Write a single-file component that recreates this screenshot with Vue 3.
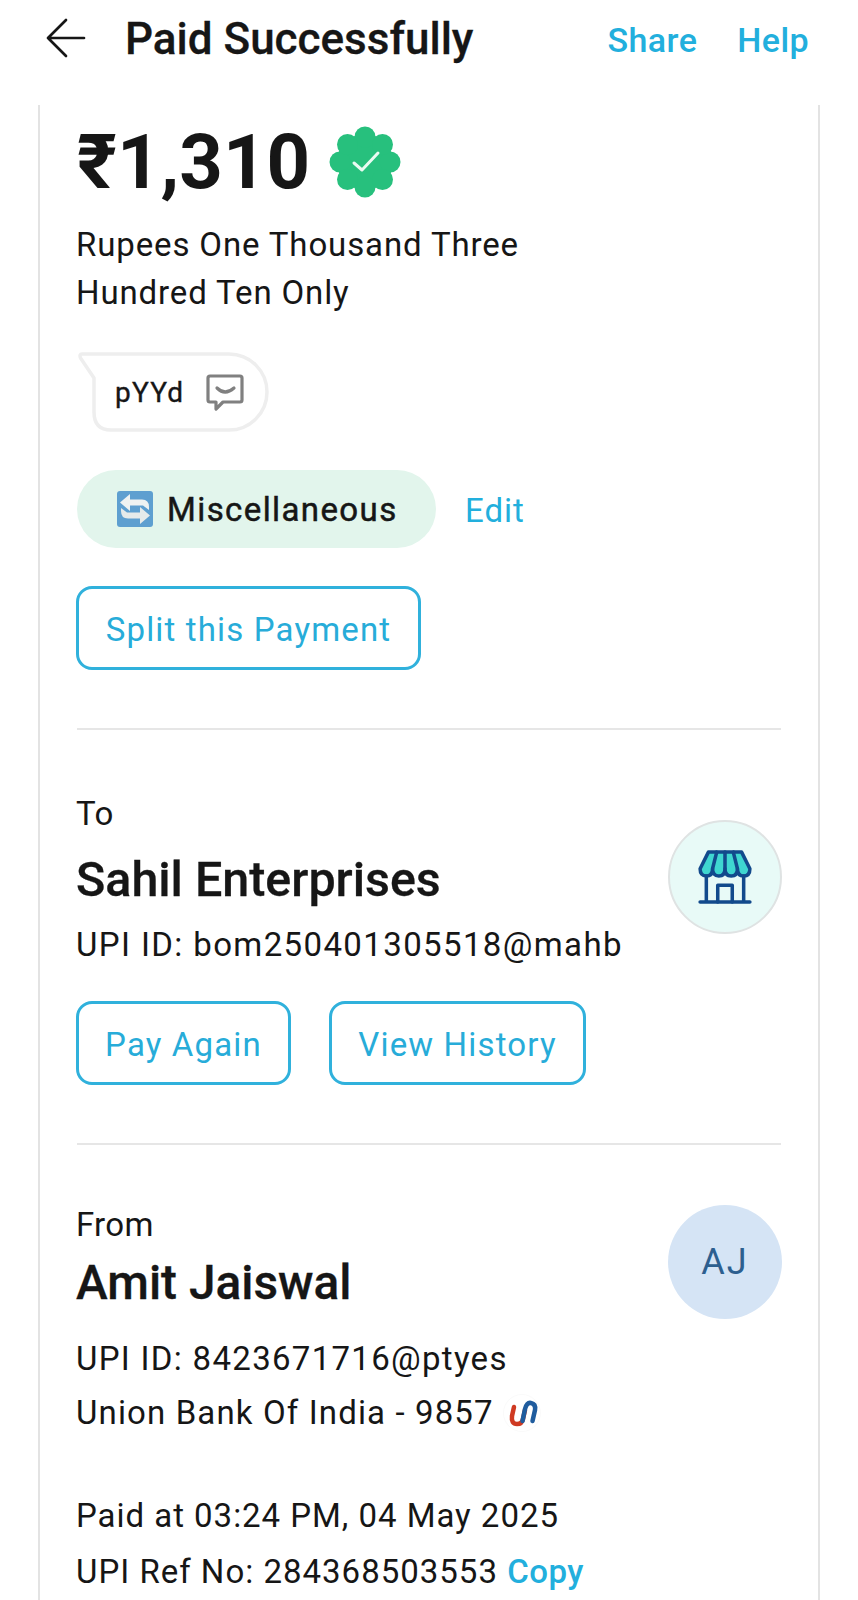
<script setup>
</script>

<template>
  <div class="page">
    <header class="top">
      <svg class="back" viewBox="0 0 40 40" width="40" height="40" fill="none" stroke="#161616" stroke-width="2.700" stroke-linecap="round" stroke-linejoin="round">
        <path d="M38 20H2M20 2 2 20l18 18" />
      </svg>
      <h1>Paid Successfully</h1>
      <a class="share">Share</a>
      <a class="help">Help</a>
    </header>

    <main class="card">
      <section class="first">
        <div class="amount">
          <span>₹1,310</span>
          <svg viewBox="0 0 72 72" width="72" height="72">
            <g fill="#27c07d">
              <circle cx="36" cy="36" r="28" />
              <circle cx="36" cy="11" r="10.500" />
              <circle cx="36" cy="61" r="10.500" />
              <circle cx="11" cy="36" r="10.500" />
              <circle cx="61" cy="36" r="10.500" />
              <circle cx="18.500" cy="18.500" r="10.500" />
              <circle cx="53.500" cy="18.500" r="10.500" />
              <circle cx="18.500" cy="53.500" r="10.500" />
              <circle cx="53.500" cy="53.500" r="10.500" />
            </g>
            <path d="M25 37l8 7 16-17" fill="none" stroke="#e9fbf2" stroke-width="3" stroke-linecap="round" stroke-linejoin="round" />
          </svg>
        </div>
        <p class="words">Rupees One Thousand Three<br />Hundred Ten Only</p>

        <div class="bubble">
          <svg class="bubble-bg" viewBox="0 0 192 80" width="192" height="80">
            <path d="M5 2H152A38 38 0 0 1 152 78H34Q17 78 17 60V26L3.500 6Q2 2 5 2Z" fill="#fff" stroke="#eeeeee" stroke-width="3.500" stroke-linejoin="round" />
          </svg>
          <span class="note">pYYd</span>
          <svg class="note-icon" viewBox="0 0 38 38" width="38" height="38" fill="none" stroke="#808080" stroke-width="3.200" stroke-linejoin="round" stroke-linecap="round">
            <path d="M4 2H34Q36 2 36 4V26Q36 28 34 28H17L10 35V28H4Q2 28 2 26V4Q2 2 4 2Z" />
            <path d="M11 14Q19 22 28 14" />
          </svg>
        </div>

        <div class="category">
          <div class="chip">
            <svg viewBox="0 0 36 36" width="36" height="36">
              <rect width="36" height="36" rx="3" fill="#5e9fd0" />
              <path d="M3 11.500 13 3V8.500H25Q32 8.500 32 16V19L26 14.500H13V20Z" fill="#eef2f2" />
              <path d="M33 24.500 23 33V27.500H11Q4 27.500 4 20V17L10 21.500H23V16Z" fill="#e6eaea" />
            </svg>
            <span>Miscellaneous</span>
          </div>
          <a class="edit">Edit</a>
        </div>

        <button class="outline split">Split this Payment</button>
      </section>

      <section class="to">
        <div class="row">
          <div>
            <div class="label">To</div>
            <div class="name">Sahil Enterprises</div>
            <div class="info upi">UPI ID: bom250401305518@mahb</div>
          </div>
          <div class="avatar store">
            <svg viewBox="0 0 52 54" width="54" height="56" fill="none" stroke="#124a8c" stroke-width="3.400" stroke-linejoin="round" stroke-linecap="round">
              <path d="M10 3H42L50 19Q50 26 44 26 38 26 38 19 38 26 32 26 26 26 26 19 26 26 20 26 14 26 14 19 14 26 8 26 2 26 2 19Z" fill="#3fd6d0" />
              <path d="M14 19 18 3M26 19V3M38 19 34 3" />
              <path d="M8 26V51M44 26V51M2 51H50" />
              <path d="M19 51V35H33V51" />
            </svg>
          </div>
        </div>
        <div class="actions">
          <button class="outline pay">Pay Again</button>
          <button class="outline history">View History</button>
        </div>
      </section>

      <section class="from">
        <div class="row">
          <div>
            <div class="label">From</div>
            <div class="name amit">Amit Jaiswal</div>
            <div class="info acc">UPI ID: 8423671716@ptyes</div>
            <div class="info bank">
              Union Bank Of India - 9857
              <svg viewBox="0 0 38 38" width="38" height="38" fill="none" stroke-width="4.500" stroke-linecap="round">
                <circle cx="19" cy="19" r="18.500" fill="#fff" stroke="#fafafa" stroke-width="1" />
                <path d="M11 13 9 22Q8 30 14 30 19 30 20 25L22 16" stroke="#cf3a22" />
                <path d="M19.500 27 22 15Q24 8 28 9 33 10 32 16L29.500 27" stroke="#1f5c9e" />
              </svg>
            </div>
          </div>
          <div class="avatar initials">AJ</div>
        </div>
        <div class="info paid">Paid at 03:24 PM, 04 May 2025</div>
        <div class="info ref">UPI Ref No: 284368503553 <a class="copy">Copy</a></div>
      </section>
    </main>
  </div>
</template>

<style>
html, body { margin: 0; background: #fff; }
</style>

<style scoped>
.page {
  width: 858px;
  height: 1600px;
  overflow: hidden;
  background: #fff;
  color: #161616;
  font-family: Roboto, "Noto Sans", sans-serif;
  box-sizing: border-box;
}
.top {
  display: flex;
  align-items: center;
  height: 105px;
  padding: 0 49px 25px 46px;
  box-sizing: border-box;
}
.back { flex: none; margin-bottom: 4px; }
h1 {
  margin: 0 0 2px 39px;
  flex: 1;
  font-size: 44px;
  font-weight: 500;
  line-height: 50px;
  -webkit-text-stroke: 0.3px #161616;
}
.share, .help {
  color: #22afdd;
  font-size: 34px;
  font-weight: 500;
  letter-spacing: 0.4px;
}
.help { margin-left: 40px; }
.card {
  margin: 0 38px;
  height: 1495px;
  width: 704px;
  padding: 0 37px;
  border-left: 2px solid #e3e3e3;
  border-right: 2px solid #e3e3e3;
}
.first {
  border-bottom: 2px solid #e6e6e6;
  height: 625px;
  box-sizing: border-box;
}
.amount {
  display: flex;
  align-items: center;
  gap: 19px;
  height: 72px;
  padding-top: 21px;
  font-size: 76px;
  font-weight: 700;
  line-height: 72px;
}
.words {
  margin: 23px 0 0 -1px;
  font-size: 33px;
  line-height: 48px;
  letter-spacing: 0.87px;
}
.bubble {
  position: relative;
  display: flex;
  align-items: center;
  gap: 22px;
  width: 192px;
  height: 80px;
  margin-top: 35px;
  padding-left: 38px;
  box-sizing: border-box;
}
.bubble-bg { position: absolute; left: 0; top: 0; }
.note {
  position: relative;
  font-size: 28px;
  font-weight: 400;
  letter-spacing: 1.2px;
  -webkit-text-stroke: 0.35px #161616;
}
.note-icon { position: relative; top: 1px; }
.category {
  display: flex;
  align-items: center;
  margin-top: 38px;
}
.chip {
  display: flex;
  align-items: center;
  gap: 14px;
  width: 359px;
  height: 78px;
  padding-left: 40px;
  box-sizing: border-box;
  border-radius: 39px;
  background: #e2f5ec;
  font-size: 33px;
  font-weight: 400;
  letter-spacing: 1.4px;
  -webkit-text-stroke: 0.5px #161616;
}
.edit {
  margin: 3px 0 0 29px;
  color: #22afdd;
  font-size: 33px;
  letter-spacing: 1px;
}
.outline {
  display: flex;
  align-items: center;
  justify-content: center;
  height: 84px;
  padding: 2px 0 0;
  border: 3px solid #30b1dc;
  border-radius: 16px;
  background: #fff;
  color: #27acd9;
  font-family: inherit;
  font-size: 33px;
  letter-spacing: 1.15px;
  box-sizing: border-box;
}
.split { width: 345px; margin: 38px 0 0 -1px; }
.row {
  display: flex;
  justify-content: space-between;
}
.to {
  height: 415px;
  padding-top: 65px;
  border-bottom: 2px solid #e6e6e6;
  box-sizing: border-box;
}
.label {
  font-size: 33px;
  line-height: 38px;
  letter-spacing: 0.3px;
  margin-left: -1px;
}
.name {
  margin: 17px 0 0 -1px;
  font-size: 48.4px;
  font-weight: 500;
  line-height: 60px;
  -webkit-text-stroke: 0.3px #161616;
}
.info {
  margin-left: -1px;
  font-size: 33px;
  line-height: 44px;
}
.upi { margin-top: 13px; letter-spacing: 1.38px; }
.avatar {
  display: flex;
  align-items: center;
  justify-content: center;
  flex: none;
  width: 114px;
  height: 114px;
  margin-right: -1px;
  border-radius: 50%;
  box-sizing: border-box;
}
.store {
  margin-top: 25px;
  border: 2px solid #dfe3e3;
  background: #e8faf7;
}
.actions {
  display: flex;
  gap: 38px;
  margin: 34px 0 0 -1px;
}
.pay { width: 215px; }
.history { width: 257px; }
.from { padding-top: 61px; }
.from .amit { margin-top: 9px; font-size: 47.8px; }
.acc { margin-top: 24px; letter-spacing: 1.3px; }
.bank {
  display: flex;
  align-items: center;
  gap: 9px;
  margin-top: 10px;
  letter-spacing: 1.13px;
}
.initials {
  margin-top: -1px;
  background: #d5e4f5;
  color: #2d5f8f;
  font-size: 36px;
  letter-spacing: 2px;
}
.paid { margin-top: 59px; letter-spacing: 0.97px; }
.ref { margin-top: 12px; letter-spacing: 1px; }
.copy { color: #22afdd; font-weight: 500; letter-spacing: 0.5px; }
</style>
